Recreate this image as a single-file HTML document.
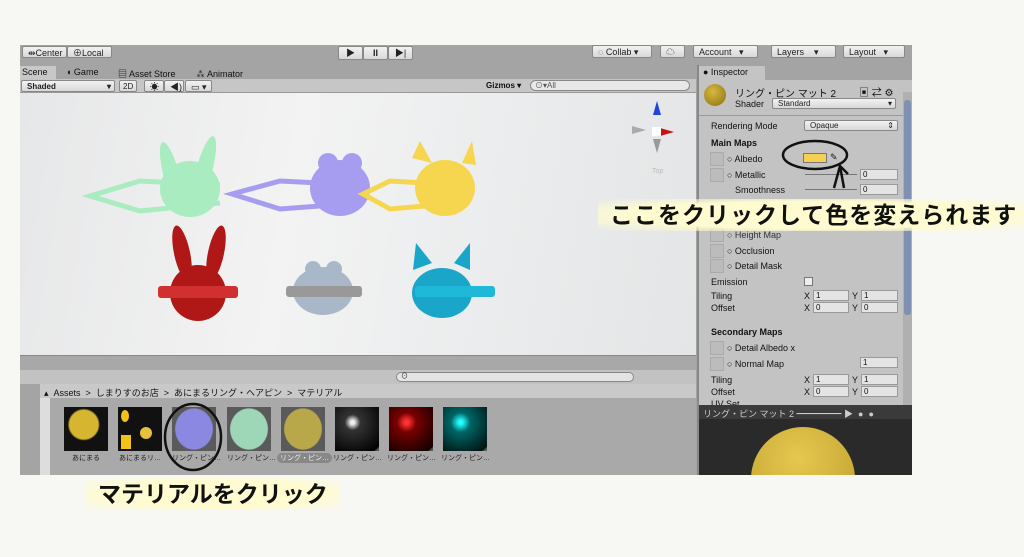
<!DOCTYPE html><html><head><meta charset="utf-8"><style>
*{margin:0;padding:0;box-sizing:border-box}
body{width:1024px;height:557px;background:#f7f7f3;position:relative;overflow:hidden;font-family:"Liberation Sans","Noto Sans CJK JP",sans-serif;font-size:9px;color:#111}
.a{position:absolute}
.btn{position:absolute;background:linear-gradient(#f2f2f2,#d8d8d8);border:1px solid #888;border-radius:2px;font-size:9px;padding-left:5px;line-height:12px;color:#222}
.lbl{position:absolute;font-size:9px;color:#111;white-space:nowrap}
.fld{position:absolute;background:#e4e4e4;border:1px solid #999;height:11px;font-size:8px;line-height:9px;padding-left:2px}
.sq{position:absolute;width:14px;height:14px;background:#bcbcbc;border:1px solid #aaa}
.th{position:absolute;top:407px;width:44px;height:44px;background:#5a5a5a}
.tl{position:absolute;top:453px;font-size:7px;color:#222;white-space:nowrap}
.call{position:absolute;font-weight:bold;color:#111;background:radial-gradient(ellipse at center,#fffbd0 60%,rgba(255,251,208,0) 100%);white-space:nowrap}
</style></head><body>
<div class="a" style="left:20px;top:45px;width:892px;height:430px;background:#a4a4a4"></div>
<div class="btn" style="left:22px;top:46px;width:45px;height:12px">⇹Center</div>
<div class="btn" style="left:67px;top:46px;width:45px;height:12px">⊕Local</div>
<div class="btn" style="left:338px;top:46px;width:25px;height:14px;text-align:center;padding:0">▶</div>
<div class="btn" style="left:363px;top:46px;width:25px;height:14px;text-align:center;padding:0;font-weight:bold">II</div>
<div class="btn" style="left:388px;top:46px;width:25px;height:14px;text-align:center;padding:0">▶|</div>
<div class="btn" style="left:592px;top:45px;width:60px;height:13px">◌ Collab ▾</div>
<div class="btn" style="left:660px;top:45px;width:25px;height:13px">☁</div>
<div class="btn" style="left:693px;top:45px;width:65px;height:13px">Account &nbsp; ▾</div>
<div class="btn" style="left:771px;top:45px;width:65px;height:13px">Layers &nbsp;&nbsp; ▾</div>
<div class="btn" style="left:843px;top:45px;width:62px;height:13px">Layout &nbsp; ▾</div>
<div class="a" style="left:20px;top:66px;width:36px;height:13px;background:#c8c8c8"></div>
<div class="lbl" style="left:22px;top:67px">Scene</div>
<div class="lbl" style="left:66px;top:67px">◖ Game</div>
<div class="lbl" style="left:118px;top:67px">▤ Asset Store</div>
<div class="lbl" style="left:196px;top:67px">⁂ Animator</div>
<div class="a" style="left:20px;top:79px;width:676px;height:14px;background:#c6c6c6;border-bottom:1px solid #999"></div>
<div class="btn" style="left:21px;top:80px;width:94px;height:12px;font-weight:bold;font-size:8px">Shaded<span style="float:right;padding-right:3px">▾</span></div>
<div class="btn" style="left:119px;top:80px;width:18px;height:12px;font-size:8px;padding-left:3px">2D</div>
<div class="btn" style="left:144px;top:80px;width:20px;height:12px">☀</div>
<div class="btn" style="left:164px;top:80px;width:20px;height:12px">◀)</div>
<div class="btn" style="left:185px;top:80px;width:27px;height:12px">▭ ▾</div>
<div class="lbl" style="left:486px;top:81px;font-size:8px;font-weight:bold">Gizmos ▾</div>
<div class="a" style="left:530px;top:80px;width:160px;height:11px;background:#e8e8e8;border:1px solid #888;border-radius:6px;font-size:8px;line-height:9px;padding-left:4px;color:#555">⊙▾All</div>
<div class="a" style="left:20px;top:93px;width:676px;height:262px;background:linear-gradient(100deg,#e6e7e8 0%,#f3f3f3 40%,#eaeced 70%,#e3e5e6 100%)"></div>
<svg class="a" style="left:20px;top:93px" width="676" height="262">
<g fill="#a8ecc0"><ellipse cx="152" cy="84" rx="8" ry="36" transform="rotate(-15 152 84)"/><ellipse cx="184" cy="78" rx="8" ry="36" transform="rotate(15 184 78)"/><ellipse cx="170" cy="96" rx="30" ry="28"/></g>
<path d="M200 92 L120 88 L70 103 L120 118 L200 110" fill="none" stroke="#a8ecc0" stroke-width="5"/>
<g fill="#a79df0"><circle cx="308" cy="70" r="10"/><circle cx="332" cy="70" r="10"/><ellipse cx="320" cy="95" rx="30" ry="28"/></g>
<path d="M340 92 L260 88 L212 101 L260 116 L340 110" fill="none" stroke="#a79df0" stroke-width="5"/>
<g fill="#f6d64e"><path d="M392 65 L400 48 L412 70Z"/><path d="M442 70 L452 48 L456 72Z"/><ellipse cx="425" cy="95" rx="30" ry="28"/></g>
<path d="M440 92 L370 88 L343 101 L370 116 L440 110" fill="none" stroke="#f6d64e" stroke-width="5"/>
<g fill="#b01818"><ellipse cx="162" cy="160" rx="8" ry="28" transform="rotate(-12 162 160)"/><ellipse cx="196" cy="160" rx="8" ry="28" transform="rotate(12 196 160)"/><circle cx="178" cy="200" r="28"/></g>
<rect x="138" y="193" width="80" height="12" rx="3" fill="#d03030"/>
<g fill="#a9b8c8"><circle cx="293" cy="176" r="8"/><circle cx="314" cy="176" r="8"/><ellipse cx="303" cy="198" rx="30" ry="24"/></g>
<rect x="266" y="193" width="76" height="11" rx="3" fill="#999"/>
<g fill="#1aa6c8"><path d="M393 177 L396 150 L412 170Z"/><path d="M434 170 L450 150 L450 177Z"/><ellipse cx="422" cy="200" rx="30" ry="25"/></g>
<rect x="395" y="193" width="80" height="11" rx="3" fill="#20b8d8"/>
<path d="M637 8 l-4 14 h8z" fill="#2244dd"/><path d="M654 39 l-14 -4 v8z" fill="#cc1111"/><path d="M612 33 l14 4 l-14 4z" fill="#aaa"/><path d="M637 60 l-4 -14 h8z" fill="#999"/><rect x="632" y="34" width="9" height="9" fill="#fff"/>
<text x="632" y="80" font-size="7" fill="#bbb" font-family="Liberation Sans">Top</text>
</svg>
<div class="a" style="left:20px;top:355px;width:676px;height:15px;background:#a8a8a8;border-top:1px solid #888"></div>
<div class="a" style="left:20px;top:370px;width:676px;height:14px;background:#c2c2c2"></div>
<div class="a" style="left:396px;top:372px;width:238px;height:10px;background:#e4e4e4;border:1px solid #888;border-radius:5px;font-size:7px;line-height:8px;padding-left:4px">⊙</div>
<div class="a" style="left:40px;top:384px;width:656px;height:91px;background:#a9a9a9"></div>
<div class="a" style="left:40px;top:384px;width:656px;height:14px;background:#c9c9c9"></div>
<div class="a" style="left:40px;top:398px;width:10px;height:77px;background:#ddd"></div>
<div class="lbl" style="left:44px;top:386px;font-size:9px">▴ &nbsp;Assets &nbsp;&gt; &nbsp;しまりすのお店 &nbsp;&gt; &nbsp;あにまるリング・ヘアピン &nbsp;&gt; &nbsp;マテリアル</div>
<div class="th" style="left:64px;background:radial-gradient(circle at 45% 40%,#d6b530 0 40%,#111 45%)"></div>
<div class="th" style="left:118px;background:#111"><div class="a" style="left:3px;top:3px;width:8px;height:12px;background:#f2c21a;border-radius:50%"></div><div class="a" style="left:22px;top:20px;width:12px;height:12px;background:#e8c040;border-radius:50%"></div><div class="a" style="left:3px;top:28px;width:10px;height:14px;background:#f2c21a"></div></div>
<div class="th" style="left:172px;background:radial-gradient(ellipse 44% 48% at 50% 50%,#8a88e0 0 95%,#5a5a5a 100%)"></div>
<div class="th" style="left:227px;background:radial-gradient(ellipse 44% 48% at 50% 50%,#9ed6b8 0 95%,#5a5a5a 100%)"></div>
<div class="th" style="left:281px;background:radial-gradient(ellipse 44% 48% at 50% 50%,#b8a84a 0 95%,#5a5a5a 100%)"></div>
<div class="th" style="left:335px;background:radial-gradient(circle at 40% 35%,#eee 0 5%,#333 20%,#000 90%,#5a5a5a 95%)"></div>
<div class="th" style="left:389px;background:radial-gradient(circle at 40% 35%,#f33 0 5%,#700 25%,#100 90%,#5a5a5a 95%)"></div>
<div class="th" style="left:443px;background:radial-gradient(circle at 40% 35%,#2ff 0 5%,#066 25%,#011 90%,#5a5a5a 95%)"></div>
<div class="tl" style="left:72px">あにまる</div>
<div class="tl" style="left:119px">あにまるリ…</div>
<div class="tl" style="left:172px">リング・ピン…</div>
<div class="tl" style="left:227px">リング・ピン…</div>
<div class="tl" style="left:277px;background:#888;color:#eee;border-radius:5px;padding:0 3px">リング・ピン…</div>
<div class="tl" style="left:333px">リング・ピン…</div>
<div class="tl" style="left:387px">リング・ピン…</div>
<div class="tl" style="left:441px">リング・ピン…</div>
<svg class="a" style="left:158px;top:400px" width="70" height="80"><ellipse cx="35" cy="37" rx="28" ry="33" fill="none" stroke="#111" stroke-width="2.5"/></svg>
<div class="a" style="left:697px;top:65px;width:2px;height:410px;background:#888"></div>
<div class="a" style="left:699px;top:66px;width:66px;height:14px;background:#c4c4c4"></div>
<div class="lbl" style="left:703px;top:67px">● Inspector</div>
<div class="a" style="left:699px;top:80px;width:213px;height:325px;background:#c3c3c3"></div>
<div class="a" style="left:903px;top:92px;width:9px;height:313px;background:#b0b0b0"></div>
<div class="a" style="left:904px;top:100px;width:7px;height:215px;background:#7f90b0;border-radius:3px"></div>
<div class="a" style="left:704px;top:84px;width:22px;height:22px;border-radius:50%;background:radial-gradient(circle at 40% 35%,#d8b840,#8a7010)"></div>
<div class="lbl" style="left:735px;top:85px;font-size:10px">リング・ピン マット 2</div>
<div class="lbl" style="left:859px;top:84px;font-size:10px">▣ ⇄ ⚙</div>
<div class="lbl" style="left:735px;top:99px">Shader</div>
<div class="btn" style="left:772px;top:98px;width:124px;height:11px;font-size:8px;line-height:9px">Standard<span style="float:right;padding-right:3px">▾</span></div>
<div class="a" style="left:699px;top:115px;width:204px;height:1px;background:#999"></div>
<div class="lbl" style="left:711px;top:121px">Rendering Mode</div>
<div class="btn" style="left:804px;top:120px;width:94px;height:11px;font-size:8px;line-height:9px">Opaque<span style="float:right;padding-right:3px">⇕</span></div>
<div class="lbl" style="left:711px;top:138px;font-weight:bold">Main Maps</div>
<div class="sq" style="left:710px;top:152px"></div><div class="lbl" style="left:727px;top:154px">○ Albedo</div>
<div class="a" style="left:803px;top:153px;width:24px;height:10px;background:#f6d050;border:1px solid #777"></div>
<div class="lbl" style="left:830px;top:152px">✎</div>
<div class="sq" style="left:710px;top:168px"></div><div class="lbl" style="left:727px;top:170px">○ Metallic</div>
<div class="a" style="left:805px;top:174px;width:52px;height:1px;background:#777"></div>
<div class="fld" style="left:860px;top:169px;width:38px">0</div>
<div class="lbl" style="left:735px;top:185px">Smoothness</div>
<div class="a" style="left:805px;top:189px;width:52px;height:1px;background:#777"></div>
<div class="fld" style="left:860px;top:184px;width:38px">0</div>
<div class="sq" style="left:710px;top:228px"></div><div class="lbl" style="left:727px;top:230px;color:#333">○ Height Map</div>
<div class="sq" style="left:710px;top:244px"></div><div class="lbl" style="left:727px;top:246px">○ Occlusion</div>
<div class="sq" style="left:710px;top:259px"></div><div class="lbl" style="left:727px;top:261px">○ Detail Mask</div>
<div class="lbl" style="left:711px;top:277px">Emission</div>
<div class="a" style="left:804px;top:277px;width:9px;height:9px;background:#eee;border:1px solid #777"></div>
<div class="lbl" style="left:711px;top:291px">Tiling</div><div class="lbl" style="left:804px;top:291px">X</div><div class="fld" style="left:813px;top:290px;width:36px">1</div><div class="lbl" style="left:852px;top:291px">Y</div><div class="fld" style="left:861px;top:290px;width:37px">1</div>
<div class="lbl" style="left:711px;top:303px">Offset</div><div class="lbl" style="left:804px;top:303px">X</div><div class="fld" style="left:813px;top:302px;width:36px">0</div><div class="lbl" style="left:852px;top:303px">Y</div><div class="fld" style="left:861px;top:302px;width:37px">0</div>
<div class="lbl" style="left:711px;top:327px;font-weight:bold">Secondary Maps</div>
<div class="sq" style="left:710px;top:341px"></div><div class="lbl" style="left:727px;top:343px">○ Detail Albedo x</div>
<div class="sq" style="left:710px;top:357px"></div><div class="lbl" style="left:727px;top:359px">○ Normal Map</div>
<div class="fld" style="left:860px;top:357px;width:38px">1</div>
<div class="lbl" style="left:711px;top:375px">Tiling</div><div class="lbl" style="left:804px;top:375px">X</div><div class="fld" style="left:813px;top:374px;width:36px">1</div><div class="lbl" style="left:852px;top:375px">Y</div><div class="fld" style="left:861px;top:374px;width:37px">1</div>
<div class="lbl" style="left:711px;top:387px">Offset</div><div class="lbl" style="left:804px;top:387px">X</div><div class="fld" style="left:813px;top:386px;width:36px">0</div><div class="lbl" style="left:852px;top:387px">Y</div><div class="fld" style="left:861px;top:386px;width:37px">0</div>
<div class="lbl" style="left:711px;top:399px">UV Set</div>
<div class="a" style="left:699px;top:405px;width:213px;height:14px;background:#3a3a3a"></div>
<div class="lbl" style="left:703px;top:407px;color:#ccc">リング・ピン マット 2 ━━━━━ ▶ &nbsp;● &nbsp;●</div>
<div class="a" style="left:699px;top:419px;width:213px;height:56px;background:#2a2a2a;overflow:hidden"><div class="a" style="left:52px;top:8px;width:104px;height:104px;border-radius:50%;background:radial-gradient(circle at 45% 30%,#e6c850,#b89a28)"></div></div>
<svg class="a" style="left:780px;top:138px" width="80" height="60"><ellipse cx="35" cy="17" rx="32" ry="14" fill="none" stroke="#111" stroke-width="2.5"/><path d="M54 50 L60 28 L68 36 M60 28 L64 50" fill="none" stroke="#111" stroke-width="2.5"/></svg>
<div class="call" style="left:598px;top:199px;padding:2px 12px;font-size:23px;letter-spacing:1px;line-height:28px">ここをクリックして色を変えられます</div>
<div class="call" style="left:86px;top:478px;padding:2px 12px;font-size:23px;line-height:28px">マテリアルをクリック</div>
</body></html>
